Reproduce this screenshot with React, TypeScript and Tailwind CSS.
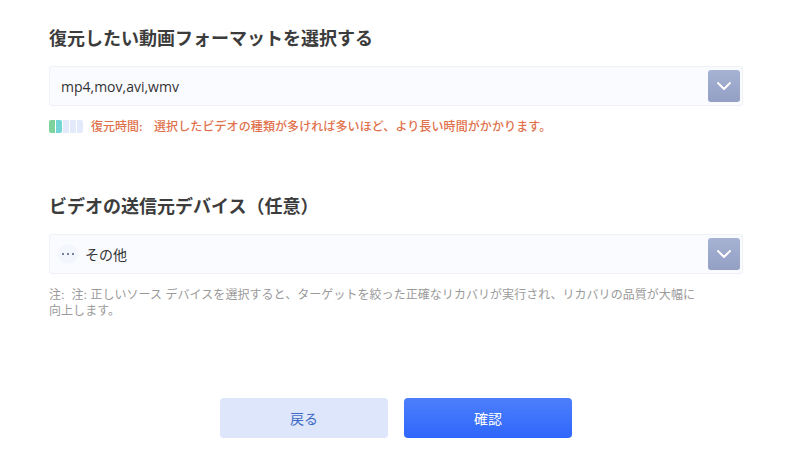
function Chevron() {
  return (
    <div className="flex h-8 w-8 items-center justify-center rounded-[3px] bg-gradient-to-b from-[#a7b3d3] to-[#939fc4]">
      <svg width="16" height="10" viewBox="0 0 16 10" fill="none">
        <path d="M2 2l6 6 6-6" stroke="#ffffff" strokeWidth="2" strokeLinecap="round" strokeLinejoin="round" />
      </svg>
    </div>
  );
}

function SelectBox({ children }: { children: React.ReactNode }) {
  return (
    <div className="flex h-10 w-[694px] items-center justify-between rounded-[3px] border border-[#eff1f7] bg-[#fafbff] pr-[2px]">
      {children}
      <Chevron />
    </div>
  );
}

export default function App() {
  return (
    <div className="flex h-[462px] w-[811px] flex-col bg-white pl-[49px] font-['Inter','Noto_Sans_CJK_JP',sans-serif]">
      <h1 className="mt-[26px] h-[26px] text-[18px] leading-[26px] font-bold text-[#3c3c3c]">
        復元したい動画フォーマットを選択する
      </h1>
      <div className="mt-[14px]">
        <SelectBox>
          <span className="pl-[11px] font-['Open_Sans','Noto_Sans_CJK_JP',sans-serif] text-[14px] text-[#333333]">mp4,mov,avi,wmv</span>
        </SelectBox>
      </div>
      <div className="mt-[14px] flex h-[13px] items-center">
        <div className="flex gap-[1px]">
          <span className="h-[13px] w-[6px] rounded-l-[2px] bg-[#7ed29b]" />
          <span className="h-[13px] w-[6px] rounded-r-[2px] bg-[#73d5d5]" />
          <span className="h-[13px] w-[6px] bg-[#e2eafb]" />
          <span className="h-[13px] w-[6px] bg-[#e2eafb]" />
          <span className="h-[13px] w-[6px] rounded-r-[2px] bg-[#e2eafb]" />
        </div>
        <span className="ml-[8px] w-[63px] text-[12px] font-medium text-[#e0714c]">復元時間:</span>
        <span className="text-[12px] font-medium tracking-[0.1px] text-[#e0714c]">
          選択したビデオの種類が多ければ多いほど、より長い時間がかかります。
        </span>
      </div>
      <h2 className="mt-[61px] h-[26px] text-[18px] leading-[26px] font-bold text-[#3c3c3c]">
        ビデオの送信元デバイス（任意）
      </h2>
      <div className="mt-[14px]">
        <SelectBox>
          <div className="flex items-center pl-[8px]">
            <span className="flex h-[20px] w-[20px] items-center justify-center gap-[3px] rounded-full bg-[#f3f7fd]">
              <span className="h-[2px] w-[2px] rounded-full bg-[#4a5a78]" />
              <span className="h-[2px] w-[2px] rounded-full bg-[#4a5a78]" />
              <span className="h-[2px] w-[2px] rounded-full bg-[#4a5a78]" />
            </span>
            <span className="ml-[7px] text-[14px] text-[#333333]">その他</span>
          </div>
        </SelectBox>
      </div>
      <p className="mt-[13px] w-[650px] text-[12px] leading-[16px] tracking-[0.05px] text-[#9a9a9a]">
        {"注:\u00A0 注: 正しいソース デバイスを選択すると、ターゲットを絞った正確なリカバリが実行され、リカバリの品質が大幅に向上します。"}
      </p>
      <div className="mt-[79px] flex gap-4 pl-[171px]">
        <button className="h-10 w-[168px] rounded-[4px] bg-[#dde6fb] text-[14px] text-[#3d6bc4]">戻る</button>
        <button className="h-10 w-[168px] rounded-[4px] bg-gradient-to-b from-[#4d7ffb] to-[#2f66fb] text-[14px] text-white">確認</button>
      </div>
    </div>
  );
}
